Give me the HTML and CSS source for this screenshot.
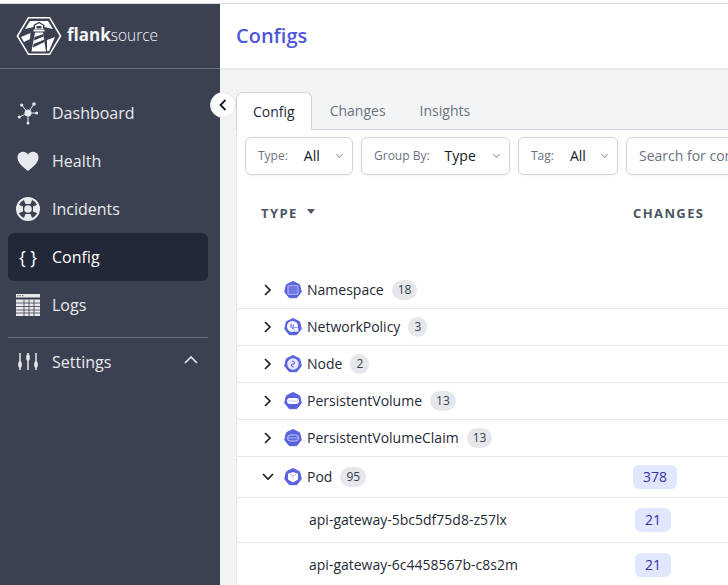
FILE: index.html
```html
<!DOCTYPE html>
<html lang="en">
<head>
    <meta charset="UTF-8">
    <title>Configs</title>
    <link rel="stylesheet" href="styles.css">
</head>
<body>
    <div class="app">
        <aside class="sidebar">
            <div class="logo">
                <svg class="logo-mark" width="46" height="40" viewBox="0 0 46 40">
                    <path d="M12 1H34L45.500 20L34 39H12L0.500 20Z" fill="#fff"/>
                    <path d="M12.800 2.600H33.200L43.600 20L33.200 37.400H12.800L2.400 20Z" fill="#3c4152"/>
                    <path d="M14 5H32L37 13L28.500 11V9L23 5.800L17.500 9V11L9 13Z" fill="#fff"/>
                    <path d="M19 9.500L23 7.300L27 9.500V13H19Z" fill="#fff"/>
                    <path d="M20.500 10H25.500V12.500H20.500Z" fill="#3c4152"/>
                    <path d="M17.500 13.500H28.500V15.500H17.500Z" fill="#fff"/>
                    <path d="M19 16.500H27L30 35.500H15.500Z" fill="#fff"/>
                    <path d="M18.500 21L27.500 18V20.500L18 24.500ZM17.500 28L28.500 23.500V26L17 31.500Z" fill="#3c4152"/>
                    <path d="M5 21L14.500 17L14 23L8 26ZM31 24L39 21L33 35H31Z" fill="#fff"/>
                </svg>
                <span class="logo-text"><b>flank</b><span class="logo-light">source</span></span>
            </div>
            <nav class="nav">
                <a class="nav-item">
                    <svg class="nav-icon" width="24" height="24" viewBox="0 0 24 24">
                        <g stroke="#e8e9ec" stroke-width="1"><path d="M12 12L5.700 4M12 12L18 3M12 12L3.300 16M12 12L20.700 12M12 12L12 22"/></g>
                        <g fill="#e8e9ec"><circle cx="12" cy="12" r="3.500"/><circle cx="5.700" cy="4" r="1.600"/><circle cx="18" cy="3" r="1.800"/><circle cx="3.300" cy="16" r="1.600"/><circle cx="20.700" cy="12" r="1.500"/><circle cx="12" cy="22" r="1.500"/></g>
                    </svg>
                    Dashboard
                </a>
                <a class="nav-item">
                    <svg class="nav-icon" width="24" height="24" viewBox="0 0 24 24">
                        <path d="M12 22C5 16.500 1.500 13 1.500 8.500C1.500 5 4 2.800 7 2.800C9 2.800 11 3.800 12 5.500C13 3.800 15 2.800 17 2.800C20 2.800 22.500 5 22.500 8.500C22.500 13 19 16.500 12 22Z" fill="#e8e9ec"/>
                    </svg>
                    Health
                </a>
                <a class="nav-item">
                    <svg class="nav-icon" width="24" height="24" viewBox="0 0 24 24">
                        <circle cx="12" cy="12" r="11" fill="none" stroke="#e8e9ec" stroke-width="2"/>
                        <g fill="#e8e9ec">
                            <path d="M7.500 2H16.500L14.500 7H9.500ZM7.500 22H16.500L14.500 17H9.500ZM2 7.500L7 9.500V14.500L2 16.500ZM22 7.500L17 9.500V14.500L22 16.500Z"/>
                            <circle cx="12" cy="12" r="3.800"/>
                        </g>
                    </svg>
                    Incidents
                </a>
                <a class="nav-item active">
                    <span class="nav-icon braces">{ }</span>
                    Config
                </a>
                <a class="nav-item">
                    <svg class="nav-icon" width="24" height="22" viewBox="0 0 24 22">
                        <path d="M0 0H24V3.500H0ZM0 5.500H24V22H0Z" fill="#e8e9ec"/>
                        <path d="M1 1.700H2.500M3.500 1.700H5M6 1.700H7.500M0 9H24M0 12.500H24M0 16H24M0 19H24M8 5.500V22M13 5.500V22M18 5.500V22" stroke="#3c4152" stroke-width="0.800" fill="none"/>
                    </svg>
                    Logs
                </a>
                <a class="nav-item settings">
                    <svg class="nav-icon" width="24" height="24" viewBox="0 0 24 24">
                        <g stroke="#e8e9ec" fill="none">
                            <path d="M4 3V20M12 3V20M20 3V20" stroke-width="1.500"/>
                            <path d="M4 13V16M12 6V9M20 13V16" stroke-width="3.500" stroke-linecap="round"/>
                        </g>
                    </svg>
                    Settings
                    <svg class="nav-caret" width="14" height="8" viewBox="0 0 14 8"><path d="M1 7L7 1L13 7" fill="none" stroke="#e8e9ec" stroke-width="1.600"/></svg>
                </a>
            </nav>
        </aside>
        <button class="collapse">
            <svg width="8" height="12" viewBox="0 0 8 12"><path d="M6.500 1L1.500 6L6.500 11" fill="none" stroke="#111827" stroke-width="1.800"/></svg>
        </button>
        <main class="main">
            <header class="topbar"><h1>Configs</h1></header>
            <section class="content">
                <div class="tabs">
                    <span class="tab active">Config</span>
                    <span class="tab">Changes</span>
                    <span class="tab">Insights</span>
                </div>
                <div class="panel">
                    <div class="filters">
                        <div class="select select-type"><label>Type:</label><span>All</span><i></i></div>
                        <div class="select select-group"><label>Group By:</label><span>Type</span><i></i></div>
                        <div class="select select-tag"><label>Tag:</label><span>All</span><i></i></div>
                        <div class="search">Search for configs</div>
                    </div>
                    <div class="table-head">
                        <div class="th">TYPE <b class="sort"></b></div>
                        <div class="th">CHANGES</div>
                    </div>
                    <div id="rows"></div>
                </div>
            </section>
        </main>
    </div>
    <script src="script.js"></script>
</body>
</html>
```

FILE: styles.css
```css
* {
    box-sizing: border-box;
}

html, body {
    margin: 0;
    height: 100%;
    overflow: hidden;
}

body {
    font-family: "Open Sans", sans-serif;
    font-size: 14px;
    color: #1f2937;
    background: #fff;
    padding-top: 3px;
}

.app {
    display: flex;
    position: relative;
    height: 582px;
    border-top: 1px solid #d9dae0;
}

.sidebar {
    flex: 0 0 220px;
    background: #3c4152;
    color: #e8e9ec;
}

.logo {
    display: flex;
    align-items: center;
    height: 65px;
    padding-left: 16px;
    padding-bottom: 1px;
    border-bottom: 1px solid #6d7080;
}

.logo-text {
    margin-left: 5px;
    margin-bottom: 2px;
    font-size: 17px;
    color: #f3f4f6;
}

.logo-text b {
    font-weight: 700;
}

.logo-light {
    font-size: 15.500px;
    font-weight: 300;
}

.nav {
    padding: 20px 12px 0 8px;
}

.nav-item {
    display: flex;
    align-items: center;
    height: 48px;
    padding-left: 8px;
    font-size: 16px;
    font-weight: 500;
    border-radius: 6px;
    color: #e8e9ec;
}

.nav-item.active {
    background: #232838;
    color: #fff;
}

.nav-icon {
    flex: 0 0 24px;
    margin-right: 12px;
}

.braces {
    font-size: 18px;
    text-align: center;
    white-space: nowrap;
    color: #fff;
}

.settings {
    margin-top: 9px;
    position: relative;
}

.settings::before {
    content: "";
    position: absolute;
    top: -1px;
    left: 0;
    right: 0;
    border-top: 1px solid #6d7080;
}

.nav-caret {
    margin-left: auto;
    margin-right: 10px;
    margin-bottom: 4px;
}

.collapse {
    position: absolute;
    left: 210px;
    top: 88px;
    width: 26px;
    height: 26px;
    padding: 0;
    border: 1px solid #e5e7eb;
    border-radius: 50%;
    background: #fff;
    display: flex;
    align-items: center;
    justify-content: center;
}

.main {
    flex: 1;
    min-width: 0;
    background: #f3f4f6;
}

.topbar {
    height: 65px;
    background: #fff;
    border-bottom: 1px solid #e5e7eb;
    box-shadow: 0 1px 2px rgba(0, 0, 0, 0.05);
    display: flex;
    align-items: center;
    padding: 0 0 2px 16px;
}

.topbar h1 {
    margin: 0;
    font-size: 20px;
    font-weight: 600;
    color: #4f56d8;
}

.content {
    padding: 23px 0 0 16px;
    width: 800px;
}

.tabs {
    display: flex;
    height: 38px;
    border-bottom: 1px solid #d1d5db;
}

.tab {
    padding: 0 17px;
    line-height: 37px;
    color: #6b7280;
    font-weight: 500;
    font-size: 14px;
}

.tab.active {
    height: 38px;
    padding: 0 16px;
    margin-right: 1px;
    background: #fff;
    color: #1f2937;
    border: 1px solid #d1d5db;
    border-bottom: none;
    border-radius: 6px 6px 0 0;
}

.panel {
    background: #fff;
    border-left: 1px solid #e5e7eb;
    height: 460px;
}

.filters {
    display: flex;
    gap: 8px;
    padding: 7px 0 0 8px;
}

.select, .search {
    display: flex;
    align-items: center;
    height: 38px;
    padding-bottom: 2px;
    background: #fff;
    border: 1px solid #d1d5db;
    border-radius: 6px;
    box-shadow: 0 1px 2px rgba(0, 0, 0, 0.05);
}

.select {
    padding-left: 12px;
    position: relative;
}

.select label {
    font-size: 12px;
    color: #6b7280;
}

.select span {
    color: #111827;
}

.select i {
    position: absolute;
    right: 10px;
    top: 14px;
    width: 5px;
    height: 5px;
    border-right: 1.500px solid #9ca3af;
    border-bottom: 1.500px solid #9ca3af;
    transform: rotate(45deg);
}

.select-type { width: 108px; }
.select-type span { margin-left: 16px; }
.select-group { width: 149px; }
.select-group span { margin-left: 15px; }
.select-tag { width: 100px; }
.select-tag span { margin-left: 16px; }

.search {
    width: 300px;
    padding-left: 12px;
    color: #6b7280;
}

.table-head {
    display: grid;
    grid-template-columns: 372px 1fr;
    padding-left: 24px;
    margin-top: 27px;
    height: 70px;
}

.th {
    font-size: 13px;
    font-weight: 700;
    letter-spacing: 1.400px;
    line-height: 22px;
    color: #4b5563;
}

.sort {
    display: inline-block;
    margin-left: 5px;
    vertical-align: 4px;
    border: 4.500px solid transparent;
    border-top: 5px solid #4b5563;
    border-bottom: 0;
}

.row {
    display: grid;
    grid-template-columns: 372px 1fr;
    align-items: center;
    padding-left: 24px;
    height: 37px;
    border-bottom: 1px solid #e5e7eb;
}

.row.group-open {
    height: 41px;
}

.row.child {
    height: 45px;
}

.row-name {
    display: flex;
    align-items: center;
}

.row.child .row-name {
    padding-left: 48px;
}

.name {
    margin-bottom: 2px;
}

.toggle {
    width: 14px;
    margin-right: 8px;
    display: flex;
    justify-content: center;
}

.kind-icon {
    margin-right: 4px;
}

.count {
    margin-left: 8px;
    min-width: 19px;
    height: 20px;
    padding: 0 6px;
    border-radius: 10px;
    background: #e5e7eb;
    font-size: 12px;
    line-height: 20px;
    text-align: center;
    color: #374151;
}

.changes {
    display: inline-block;
    height: 24px;
    padding: 0 10px;
    border-radius: 6px;
    background: #e0e7ff;
    color: #3730a3;
    line-height: 24px;
}

.row.child .changes {
    margin-left: 2px;
}
```

FILE: script.js
```js
const glyphs = {
    namespace: '<rect x="5" y="5.500" width="10" height="9" rx="1" fill="#7078e4" stroke="#a9aeee" stroke-width="1.200"/>',
    policy: '<circle cx="9.500" cy="9.500" r="5.500" fill="#fff"/><path d="M8 6.500V11M10.500 7.500L9.500 12" stroke="#5a63de" stroke-width="1.100"/><rect x="11" y="10.500" width="4.500" height="4.500" fill="#fff" stroke="#5a63de" stroke-width="0.600"/>',
    node: '<circle cx="10" cy="10" r="5.800" fill="#e6e7fa"/><path d="M9 7C12 7 12 10 10 10C8 10 8 13 11 13" fill="none" stroke="#5a63de" stroke-width="1.100"/>',
    pv: '<rect x="4" y="7" width="12" height="6" rx="3" fill="#fff"/><path d="M5 10H15" stroke="#a9aeee" stroke-width="0.600"/>',
    pvc: '<rect x="4.500" y="7" width="11" height="6" rx="3" fill="none" stroke="#c9ccf5" stroke-width="1"/><path d="M5 10H15" stroke="#c9ccf5" stroke-width="0.800"/>',
    pod: '<path d="M10 5L15 6.800V12.500L10 15.500L5 12.500V6.800Z" fill="#fff"/><path d="M7 7.500L10 8.700L13 7.500M10 8.700V12" fill="none" stroke="#a9aeee" stroke-width="0.800"/>'
};

const groups = [
    { name: 'Namespace', count: 18, icon: 'namespace' },
    { name: 'NetworkPolicy', count: 3, icon: 'policy' },
    { name: 'Node', count: 2, icon: 'node' },
    { name: 'PersistentVolume', count: 13, icon: 'pv' },
    { name: 'PersistentVolumeClaim', count: 13, icon: 'pvc' },
    { name: 'Pod', count: 95, icon: 'pod', open: true, changes: 378 }
];

const pods = ['api-gateway-5bc5df75d8-z57lx', 'api-gateway-6c4458567b-c8s2m'];

function kindIcon(name) {
    return `<svg class="kind-icon" width="20" height="20" viewBox="0 0 20 20">
        <path d="M10 1.500L16.600 4.700L18.300 11.900L13.700 17.700H6.300L1.700 11.900L3.400 4.700Z" fill="#5a63de" stroke="#5a63de" stroke-width="1" stroke-linejoin="round"/>${glyphs[name]}</svg>`;
}

function caret(open) {
    const d = open ? 'M1 3L6 8L11 3' : 'M3 1L8 6L3 11';
    return `<svg width="12" height="12" viewBox="0 0 12 12"><path d="${d}" fill="none" stroke="#111827" stroke-width="1.600"/></svg>`;
}

const rows = document.getElementById('rows');
let html = '';
groups.forEach(g => {
    html += `<div class="row ${g.open ? 'group-open' : ''}">
        <div class="row-name"><span class="toggle">${caret(g.open)}</span>${kindIcon(g.icon)}<span class="name">${g.name}</span><span class="count">${g.count}</span></div>
        <div>${g.changes ? `<span class="changes">${g.changes}</span>` : ''}</div>
    </div>`;
});
pods.forEach(p => {
    html += `<div class="row child"><div class="row-name"><span class="name">${p}</span></div><div><span class="changes">21</span></div></div>`;
});
rows.innerHTML = html;
```
